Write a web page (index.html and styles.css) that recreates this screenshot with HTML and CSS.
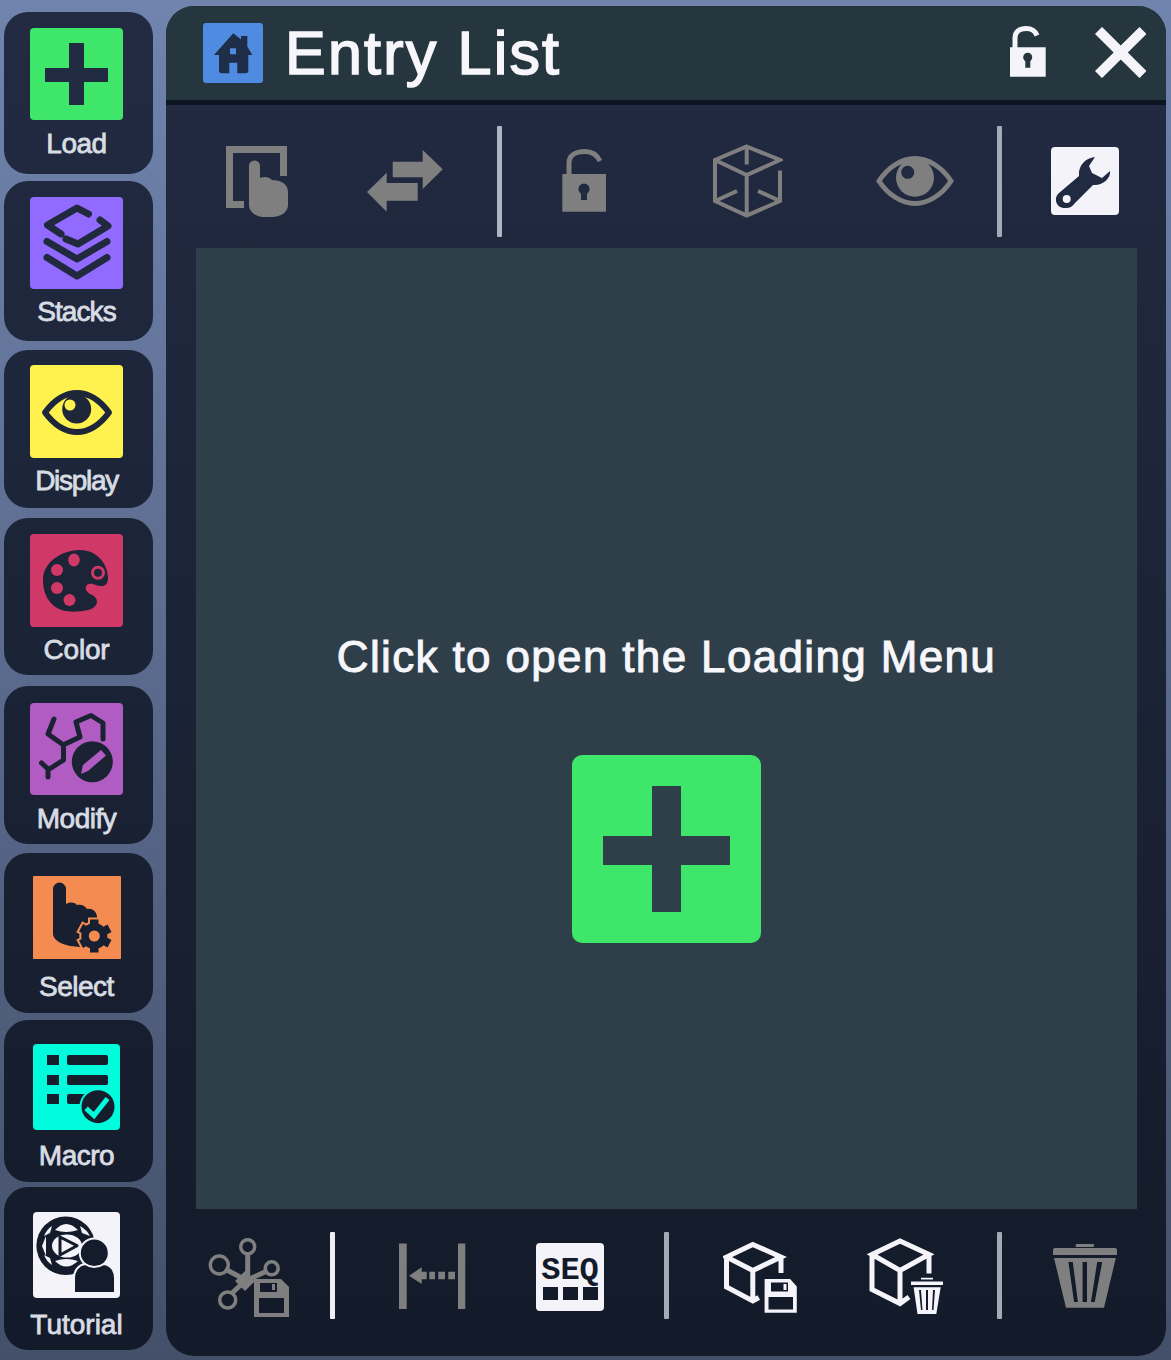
FILE: index.html
```html
<!DOCTYPE html>
<html lang="en">
<head>
<meta charset="utf-8">
<title>Entry List</title>
<link rel="stylesheet" href="styles.css">
</head>
<body>
<nav class="sidebar">
  <div class="card card-load">
    <div class="tile tile-load"><svg viewBox="30 28 93 92"><path class="ink" d="M69 43h15v25h24v14H84v23H69V82H45V68h24z"/></svg></div>
    <span class="label">Load</span>
  </div>
  <div class="card card-stacks">
    <div class="tile tile-stacks"><svg viewBox="30 197 93 92"><path class="line w7" d="M88.500 214 77 208 47.500 225 61 234M100 220l8 6-30 18-12-5M47 241.500 77 259l30-17.500M47 257.500 77 276l30-18.500"/></svg></div>
    <span class="label">Stacks</span>
  </div>
  <div class="card card-display">
    <div class="tile tile-display"><svg viewBox="30 365 93 93"><path class="line w6" d="M45 412.500C55 399 66 393 77 393s22 6 32 19.500C99 426 88 432 77 432s-22-6-32-19.500z"/><circle class="ink" cx="76.700" cy="409" r="14.500"/><circle class="cut" cx="70" cy="405" r="5.500"/></svg></div>
    <span class="label">Display</span>
  </div>
  <div class="card card-color">
    <div class="tile tile-color"><svg viewBox="30 534 93 93"><path class="ink" d="M43 580c0-18 19-30 37-30s28 15 28 28c0 10-8 9-15 6-8-2-10 6-3 10 11 4 8 14-2 16-8 2-18 2-23 1-13-3-22-14-22-31z"/><ellipse class="cut" cx="74" cy="560" rx="5.800" ry="6.500"/><circle class="cut" cx="57" cy="570" r="6"/><circle class="cut" cx="57" cy="588" r="6"/><circle class="cut" cx="69.500" cy="600" r="6"/><circle class="cut" cx="98" cy="572.700" r="7"/><circle class="ink" cx="98" cy="572.700" r="4"/></svg></div>
    <span class="label">Color</span>
  </div>
  <div class="card card-modify">
    <div class="tile tile-modify"><svg viewBox="30 703 93 92"><path class="line w5" d="M54 719l-6 15 15.500 11v15L48 770M41.500 763l6.500 6v8M63 745l17-8-4-15 15-6.500 12 7.500v16"/><circle class="ink" cx="92.300" cy="761.700" r="20.500"/><path class="cut" d="M81 774l2-9 18-15 5 5.500-18 15.500z"/></svg></div>
    <span class="label">Modify</span>
  </div>
  <div class="card card-select">
    <div class="tile tile-select"><svg viewBox="33 876 88 83"><path class="ink" d="M53 889a6.500 6.500 0 0 1 13 0v15c4-2 8-2 11 1 5-1 8 1 10 4 5-1 9 2 10 7v19l-17 12-10-1c-10-2-17-7-17-12z"/><path class="gear-halo" d="M90 919.500h8.500v33H90zM79 931.500l4-7.500 28.500 16-4 7.500zM79 940.500l4 7.500 28.500-16-4-7.500z"/><circle class="gear-halo" cx="94.300" cy="936" r="13"/><path class="ink" d="M90 919.500h8.500v33H90zM79 931.500l4-7.500 28.500 16-4 7.500zM79 940.500l4 7.500 28.500-16-4-7.500z"/><circle class="ink" cx="94.300" cy="936" r="13"/><circle class="cut" cx="94.300" cy="936" r="5.500"/></svg></div>
    <span class="label">Select</span>
  </div>
  <div class="card card-macro">
    <div class="tile tile-macro"><svg viewBox="33 1044 87 86"><path class="ink" d="M47 1055h12v10H47zM47 1075h12v10H47zM47 1094h12v10H47z"/><rect class="ink" x="67" y="1055" width="41" height="10" rx="2"/><rect class="ink" x="67" y="1075" width="41" height="10" rx="2"/><rect class="ink" x="67" y="1094" width="30" height="10" rx="2"/><circle class="ink halo" cx="98" cy="1106.700" r="17.500"/><path class="line-cut w5" d="M88 1110l6 5.500 12-15"/></svg></div>
    <span class="label">Macro</span>
  </div>
  <div class="card card-tutorial">
    <div class="tile tile-tutorial"><svg viewBox="33 1212 87 86"><circle class="ink" cx="65.700" cy="1245.700" r="29.300"/><path class="cut" d="M55 1230Q66 1218 78 1230 66 1234 55 1230zM55 1261Q66 1272 78 1261 66 1257 55 1261zM42 1246l4-10v20zM44 1236Q47 1229 52 1226L50 1233zM44 1255Q47 1262 52 1265L50 1258zM80 1226Q87 1230 90 1236L82 1233z"/><ellipse class="cut" cx="67" cy="1246" rx="15" ry="11.500"/><path class="play" d="M60 1237l17 8.700-17 9.300z"/><circle class="ink halo" cx="94.300" cy="1253" r="14.500"/><path class="ink halo" d="M74 1293v-15c0-8 5-13 11-14 3 2 6 3 9 3s7-1 10-3c7 1 11 7 11 14v15z"/></svg></div>
    <span class="label">Tutorial</span>
  </div>
</nav>

<main class="window">
  <header class="header">
    <div class="home"><svg viewBox="203 23 60 60"><path class="nav" d="M241 39.500V36h6.300v10.500L252.300 55H248.300v15a3 3 0 0 1-3 3.300H237.300V62.700H229.300V73.300H222a3 3 0 0 1-3-3.300V55H214L233.300 33.300zM230 48.300V54.300H236V48.300z"/></svg></div>
    <h1 class="title">Entry List</h1>
    <svg class="head-lock" viewBox="1010 26 36 51"><path class="white-line" d="M1015 48V38c0-6.500 5-9.500 11-9.500 6 0 9.500 3 11 7"/><path class="white" d="M1010 47.300h35.700V76.700H1010z"/><circle class="head-hole" cx="1027.700" cy="57.300" r="4.500"/><path class="head-hole" d="M1025.300 58h5v9.700h-5z"/></svg>
    <svg class="head-close" viewBox="1095 27 51 51"><path class="white-x" d="M1098.500 30.500l44.500 44M1143 30.500l-44.500 44"/></svg>
  </header>

  <div class="toolbar toolbar-top">
    <svg class="i-hand" viewBox="226 146 62 71"><path class="grey-line w7" d="M283.500 176V149.500H229.500V204.500H244"/><path class="grey" d="M249 166a5.500 5.500 0 0 1 11 0v12c5-2 9-1 12 2 9 0 16 4 16 12v13c0 7-7 12-16 12h-7c-9 0-16-5-16-12z"/></svg>
    <svg class="i-arrows" viewBox="367 150 76 62"><path class="grey" d="M392.700 161.700h30V150l20 19.300-20 19.700v-11.700h-30zM386.700 172.700V183h31v17.700h-31v11L367 192z"/></svg>
    <span class="sep sep-top1"></span>
    <svg class="i-lock" viewBox="562 148 45 64"><path class="grey-line w5" d="M569 175v-12c0-7 6-11.500 16-11.500 8 0 12 3.500 15 9.500"/><path class="grey" d="M562.300 174H606v37.700h-43.700z"/><circle class="hole" cx="584" cy="189" r="5.500"/><path class="hole" d="M581 190h6v10h-6z"/></svg>
    <svg class="i-cube" viewBox="713 144 70 75"><path class="grey-line w4" d="M746.700 146.500 780 160 746.700 175 715 160zM715 160v41l31.700 14.500L780 201V170.500M746.700 175v40.500M746.700 146.500v18M715 201l22-10M780 201l-22-10"/></svg>
    <svg class="i-eye" viewBox="876 156 78 51"><path class="grey-line w5" d="M879 181c9-14 23-22.500 36-22.500s27 8.500 36 22.500c-9 14-23 22.500-36 22.500s-27-8.500-36-22.500z"/><circle class="grey" cx="915" cy="177.700" r="19"/><circle class="hole" cx="907.700" cy="172.300" r="6.500"/></svg>
    <span class="sep sep-top2"></span>
    <div class="tool-tile"><svg viewBox="1051 147 68 68"><path class="hole" d="M1095 157c-10 1-17 9-16 19l-20 17c-6 5-3 16 7 15 4 0 7-2 9-5l18-18c10 1 18-7 17-14l-8 7-10-5-3-7z"/><circle class="tile-hole" cx="1066.700" cy="199" r="4"/></svg></div>
  </div>

  <section class="panel">
    <p class="hint">Click to open the Loading Menu</p>
    <div class="big-add"><svg viewBox="572 755 189 188"><path class="panel-ink" d="M652 786h29v50h49v29h-49v47h-29v-47h-49v-29h49z"/></svg></div>
  </section>

  <div class="toolbar toolbar-bottom">
    <svg class="i-net" viewBox="208 1238 82 80"><path class="grey-line w5" d="M247.700 1254v27L225 1269M245 1281l22-10M245 1281l-14 13"/><path class="grey" d="M245 1271l10 10-10 10-10-10z"/><g class="ring"><circle cx="247.700" cy="1246.700" r="7"/><circle cx="219.300" cy="1265" r="9"/><circle cx="271.700" cy="1268.300" r="6.500"/><circle cx="227.700" cy="1300" r="8"/></g><path class="grey" d="M254 1279h27l8 8v30h-35z"/><path class="dark-bottom" d="M260 1283h17v9h-17zM259 1298h25v15h-25z"/><path class="grey" d="M272 1284h3v6h-3z"/></svg>
    <span class="sep sep-light sep-b1"></span>
    <svg class="i-gap" viewBox="399 1243 67 67"><path class="grey" d="M399 1243.500h7.700v65.500H399zM458 1243.500h7.300v65.500H458zM409 1275.700l12.700-8.400v16.700zM421.700 1271.700h5v7.600h-5zM429.300 1271.700H435v7.600h-5.700zM438.300 1271.700h6.700v7.600h-6.700zM448.300 1271.700h6.700v7.600h-6.700z"/></svg>
    <div class="seq">
      <span class="seq-text">SEQ</span>
      <div class="seq-cells"><i></i><i></i><i></i></div>
    </div>
    <span class="sep sep-b2"></span>
    <svg class="i-cubesave" viewBox="723 1242 74 71"><path class="white-line w4" d="M752.800 1244.500 781 1257 752.800 1270.500 726.500 1257zM726.500 1257v30L752.800 1301l6-3.500M752.800 1270.500V1301M781 1257v16"/><path class="white" d="M764.600 1279h25.500l6.700 7.500v26.200h-32.200z"/><path class="dark-bottom" d="M771 1282.500h17v9h-17zM768.500 1297h24.500v12.500h-24.500z"/><path class="white" d="M783.500 1284h3v6h-3z"/></svg>
    <svg class="i-cubetrash" viewBox="866 1238 78 77"><path class="white-line w5" d="M900 1241 929 1254.500 900 1270.500 872 1254.500zM872 1254.500v35L900 1303.500l9-6.500M900 1270.500V1303.500M929 1254.500v19"/><path class="white" d="M921 1277.700h12v1.800h-12zM911 1281.500h32v3.500h-32zM913.600 1287.300h27.100l-4.400 26.700h-18.800z"/><path class="dark-bottom" d="M919 1290h2l1.500 20h-1.500zM926 1290h2v20h-2zM933 1290h2l-1.500 20H932z"/></svg>
    <span class="sep sep-b3"></span>
    <svg class="i-trash" viewBox="1053 1244 64 64"><path class="grey" d="M1075.800 1244h18v3h-18zM1055 1248h60a2 2 0 0 1 2 2v5h-64v-5a2 2 0 0 1 2-2zM1054 1258h61.800l-11.800 49.700h-38z"/><path class="dark-bottom" d="M1068.400 1262h4.400l5.100 40h-3.800zM1082.600 1262h4.400v40h-4.400zM1097.200 1262h5l-7.500 40h-3.700z"/></svg>
  </div>
</main>
</body>
</html>
```
FILE: styles.css
```css
* { box-sizing: border-box; }

html, body { margin: 0; height: 1360px; overflow: hidden; }

body {
  display: flex;
  align-items: flex-start;
  background: linear-gradient(180deg, #7084ae 0%, #44506a 100%);
  font-family: "Liberation Sans", Arial, sans-serif;
}

svg { display: block; }

.sidebar {
  display: flex;
  flex-direction: column;
  width: 149px;
  margin-left: 4px;
  padding-top: 12px;
}

.card {
  display: flex;
  flex-direction: column;
  align-items: center;
  border-radius: 24px;
  padding-right: 4px;
  color: #202a40;
  background: linear-gradient(180deg, #222b42 0px, #131a29 1360px) fixed;
}

.card-load { height: 162px; margin-bottom: 7px; padding-top: 16px; color: #212b41; }
.card-stacks { height: 160px; margin-bottom: 9px; padding-top: 16px; color: #20293e; }
.card-display { height: 158px; margin-bottom: 10px; padding-top: 15px; color: #1e273a; }
.card-color { height: 157px; margin-bottom: 11px; padding-top: 16px; color: #1c2437; }
.card-modify { height: 158px; margin-bottom: 9px; padding-top: 17px; color: #1a2234; }
.card-select { height: 160px; margin-bottom: 7px; padding-top: 23px; color: #181f30; }
.card-macro { height: 162px; margin-bottom: 5px; padding-top: 24px; color: #161d2d; }
.card-tutorial { height: 163px; padding-top: 25px; color: #141b2a; }

.tile {
  flex: none;
  width: 93px;
  height: 92px;
  border-radius: 4px;
  --cut: #3ee66a;
}

.tile svg { width: 100%; height: 100%; }

.tile-load { background: #3ee66a; }
.tile-stacks { background: #916bff; --cut: #916bff; }
.tile-display { background: #fff24f; --cut: #fff24f; height: 93px; }
.tile-color { background: #d03868; --cut: #d03868; height: 93px; }
.tile-modify { background: #b15cc2; --cut: #b15cc2; }
.tile-select { background: #f48c52; --cut: #f48c52; width: 88px; height: 83px; border-radius: 1px; }
.tile-macro { background: #00fbdd; --cut: #00fbdd; width: 87px; height: 86px; }
.tile-tutorial { background: #f3f3f9; --cut: #f3f3f9; width: 87px; height: 86px; }

.ink { fill: currentColor; }
.cut { fill: var(--cut); }
.halo { stroke: var(--cut); stroke-width: 2; }
.line { fill: none; stroke: currentColor; stroke-linejoin: round; stroke-linecap: round; }
.line-cut { fill: none; stroke: var(--cut); stroke-linecap: square; }
.play { fill: var(--cut); stroke: currentColor; stroke-width: 3; stroke-linejoin: round; }
.gear-halo { fill: var(--cut); stroke: var(--cut); stroke-width: 4; }
.w4 { stroke-width: 4; }
.w5 { stroke-width: 5; }
.w6 { stroke-width: 6; }
.w7 { stroke-width: 7; }

.label {
  margin-top: 8px;
  color: #d8dce3;
  font-size: 28px;
  line-height: 32px;
  letter-spacing: -0.5px;
  -webkit-text-stroke: 0.8px #d8dce3;
}

.card-display .label { margin-top: 7px; letter-spacing: -1.3px; }
.card-color .label { margin-top: 7px; letter-spacing: -0.2px; }
.card-stacks .label { margin-top: 7px; letter-spacing: -0.9px; }
.card-select .label { margin-top: 12px; }
.card-macro .label { margin-top: 10px; }
.card-tutorial .label { margin-top: 11px; letter-spacing: 0; }

.window {
  display: flex;
  flex-direction: column;
  width: 1000px;
  height: 1350px;
  margin: 6px 0 0 13px;
  border-radius: 28px;
  overflow: hidden;
  background: linear-gradient(180deg, #222b42 0px, #131a29 1360px) fixed;
}

.header {
  display: flex;
  align-items: center;
  flex: none;
  height: 99px;
  padding: 0 20px 0 37px;
  background: #25363f;
  border-bottom: 5px solid #0d1422;
}

.home {
  width: 60px;
  height: 60px;
  background: #4f8be0;
  border-radius: 3px;
}

.home svg { width: 60px; height: 60px; }

.nav { fill: #1e2d48; fill-rule: evenodd; }

.title {
  margin: 0 0 0 22px;
  color: #f6f6fb;
  font-size: 61px;
  font-weight: 400;
  line-height: 70px;
  letter-spacing: 2.2px;
  -webkit-text-stroke: 1.6px #f6f6fb;
}

.head-lock { width: 36px; height: 51px; margin: 0 0 3px auto; }
.head-close { width: 51px; height: 51px; margin: 0 0 1px 49px; }

.white { fill: #f4f4fa; }
.white-line { fill: none; stroke: #f4f4fa; stroke-width: 5; }
.white-x { fill: none; stroke: #f4f4fa; stroke-width: 10; }
.head-hole { fill: #25363f; }

.toolbar {
  display: flex;
  align-items: center;
  flex: none;
}

.toolbar-top { height: 143px; padding: 9px 0 0 60px; }
.toolbar-bottom { height: 147px; padding: 0 0 15px 42px; }

.grey { fill: #7f7f7f; }
.grey-line { fill: none; stroke: #7f7f7f; }
.hole { fill: #202a40; }
.dark-bottom { fill: #131a29; }
.ring { fill: none; stroke: #7f7f7f; stroke-width: 3.5; }

.sep {
  flex: none;
  width: 5px;
  background: #a2abb5;
  border-radius: 1px;
}

.sep-top1 { height: 111px; margin-left: 54px; background: #aeb6c6; }
.sep-top2 { height: 111px; margin-left: 43px; }
.sep-b1, .sep-b2, .sep-b3 { height: 87px; }
.sep-light { background: #eeeef5; }
.sep-b1 { margin-left: 40px; }
.sep-b2 { margin-left: 60px; }
.sep-b3 { margin-left: 53px; }

.i-hand { width: 62px; height: 71px; }
.i-arrows { width: 76px; height: 62px; margin-left: 79px; }
.i-lock { width: 45px; height: 64px; margin: 0 0 3px 60px; }
.i-cube { width: 70px; height: 75px; margin-left: 106px; }
.i-eye { width: 78px; height: 51px; margin-left: 93px; }

.tool-tile {
  width: 68px;
  height: 68px;
  margin-left: 49px;
  background: #f3f3f9;
  border-radius: 4px;
}

.tool-tile svg { width: 68px; height: 68px; }
.tile-hole { fill: #f3f3f9; }

.panel {
  display: flex;
  flex-direction: column;
  align-items: center;
  flex: none;
  width: 941px;
  height: 961px;
  margin-left: 30px;
  padding-top: 384px;
  background: #2f3f49;
}

.hint {
  margin: 0;
  color: #f6f6fb;
  font-size: 44px;
  line-height: 50px;
  letter-spacing: 1.35px;
  -webkit-text-stroke: 1px #f6f6fb;
}

.big-add {
  width: 189px;
  height: 188px;
  margin-top: 73px;
  background: #3ee66a;
  border-radius: 10px;
}

.big-add svg { width: 189px; height: 188px; }
.panel-ink { fill: #2f3f49; }

.i-net { width: 82px; height: 80px; margin-top: 5px; }
.i-gap { width: 67px; height: 67px; margin: 2px 0 0 64px; }
.i-cubesave { width: 74px; height: 71px; margin: 4px 0 0 54px; }
.i-cubetrash { width: 78px; height: 77px; margin: 2px 0 0 69px; }
.i-trash { width: 64px; height: 64px; margin: 1px 0 0 51px; }

.seq {
  display: flex;
  flex-direction: column;
  align-items: center;
  flex: none;
  width: 68px;
  height: 68px;
  margin: 3px 0 0 70px;
  padding-top: 14px;
  background: #f3f3f9;
  border-radius: 4px;
}

.seq-text {
  color: #131a29;
  font-family: "Liberation Mono", monospace;
  font-size: 32px;
  font-weight: 700;
  line-height: 28px;
}

.seq-cells {
  display: flex;
  gap: 5px;
  margin-top: 2px;
}

.seq-cells i {
  display: block;
  width: 15px;
  height: 13px;
  background: #131a29;
}
```
